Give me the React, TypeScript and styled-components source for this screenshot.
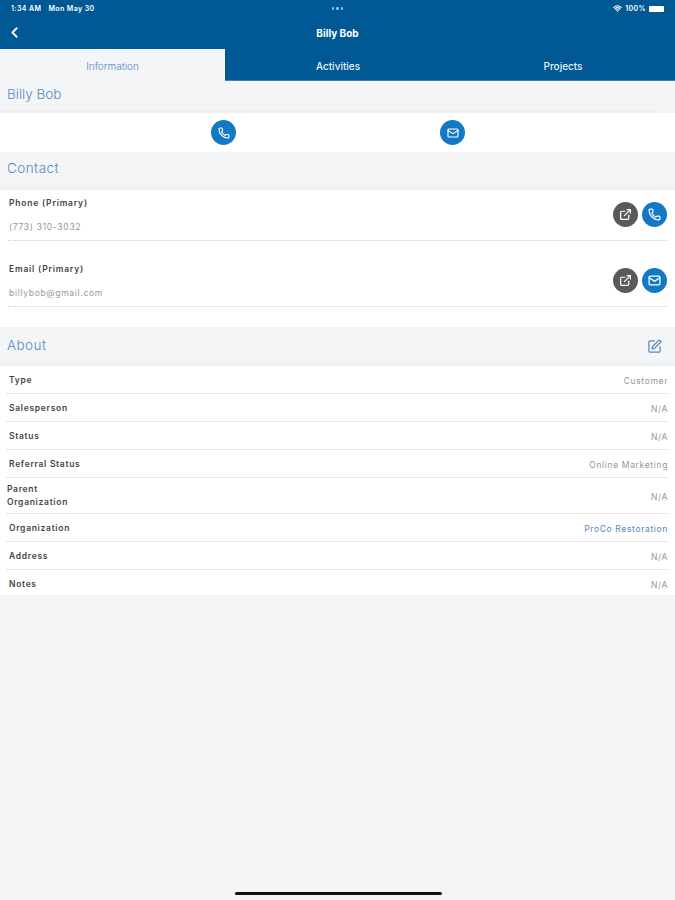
import styled, { createGlobalStyle } from "styled-components";
import { ChevronLeft, Wifi, Phone, Mail, ExternalLink, SquarePen } from "lucide-react";

const colors = {
  navy: "#005995",
  page: "#f4f5f7",
  blue: "#5389c4",
  button: "#1479c4",
  grey: "#5a5a5a",
  label: "#444444",
  value: "#969696",
  dots: "#cfcfcf",
};

const GlobalStyle = createGlobalStyle`
  html, body {
    margin: 0;
    padding: 0;
    background: ${colors.page};
    font-family: Inter, "Open Sans", sans-serif;
  }
  * { box-sizing: border-box; }
`;

const Page = styled.div`
  position: relative;
  width: 675px;
  height: 900px;
  overflow: hidden;
  background: ${colors.page};
`;

const TopBar = styled.header`
  height: 48px;
  background: ${colors.navy};
  color: #fff;
`;

const StatusBar = styled.div`
  height: 17px;
  padding: 0 11px;
  display: grid;
  grid-template-columns: 1fr auto 1fr;
  align-items: center;
  font-size: 7px;
  font-weight: 600;
  letter-spacing: 0.4px;
`;

const StatusLeft = styled.div`
  display: flex;
  gap: 7px;
`;

const StatusDots = styled.div`
  display: flex;
  gap: 2px;
`;

const Dot = styled.span`
  width: 2.5px;
  height: 2.5px;
  border-radius: 50%;
  background: #8fc0e6;
`;

const StatusRight = styled.div`
  display: flex;
  justify-content: flex-end;
  align-items: center;
  gap: 3px;
`;

const Battery = styled.span`
  width: 15px;
  height: 6px;
  border-radius: 1px;
  background: #fff;
`;

const NavRow = styled.div`
  position: relative;
  height: 31px;
  display: flex;
  align-items: center;
  justify-content: center;
  font-size: 10px;
  font-weight: 700;
`;

const BackIcon = styled(ChevronLeft)`
  position: absolute;
  left: 6px;
  top: 7px;
`;

const Tabs = styled.nav`
  height: 33px;
  display: grid;
  grid-template-columns: 225px 226px 224px;
  background: ${colors.navy};
`;

const Tab = styled.div<{ $active?: boolean }>`
  display: flex;
  align-items: center;
  justify-content: center;
  margin-top: ${(p) => (p.$active ? 1 : 0)}px;
  padding-top: ${(p) => (p.$active ? 2 : 3)}px;
  font-size: 10px;
  font-weight: ${(p) => (p.$active ? 300 : 500)};
  color: ${(p) => (p.$active ? colors.blue : "#e8f0f6")};
  background: ${(p) => (p.$active ? colors.page : "transparent")};
  border-bottom: ${(p) => (p.$active ? "none" : "1px solid #3f80b4")};
`;

const SectionHead = styled.div<{ $height: number; $short?: boolean }>`
  height: ${(p) => p.$height}px;
  margin-right: ${(p) => (p.$short ? 19 : 0)}px;
  padding: 0 13px 0 7px;
  display: flex;
  align-items: center;
  justify-content: space-between;
  border-bottom: 3px solid #eeeff1;
`;

const SectionTitle = styled.h2<{ $lift: number; $tight?: boolean }>`
  margin: 0 0 ${(p) => p.$lift}px;
  font-size: 13.5px;
  font-weight: 300;
  letter-spacing: ${(p) => (p.$tight ? 0 : 0.45)}px;
  color: ${colors.blue};
`;

const EditIcon = styled(SquarePen)`
  margin-top: 3px;
`;

const QuickActions = styled.div`
  height: 39px;
  display: grid;
  grid-template-columns: 236px 229px;
  justify-items: end;
  align-items: center;
  background: #fff;
`;

const RoundButton = styled.span<{ $grey?: boolean }>`
  width: 25px;
  height: 25px;
  flex: none;
  display: inline-flex;
  align-items: center;
  justify-content: center;
  border-radius: 50%;
  color: #fff;
  background: ${(p) => (p.$grey ? colors.grey : colors.button)};
`;

const WhiteBlock = styled.section`
  background: #fff;
`;

const ContactList = styled(WhiteBlock)`
  height: 137px;
  padding: 0 7px 0 8px;
`;

const ContactRow = styled.div`
  height: 51px;
  margin-bottom: 15px;
  padding: 7px 0 0 1px;
  display: flex;
  justify-content: space-between;
  border-bottom: 1px dotted ${colors.dots};
`;

const ContactText = styled.div`
  display: flex;
  flex-direction: column;
  gap: 11px;
`;

const ContactLabel = styled.span`
  font-size: 8.5px;
  font-weight: 600;
  line-height: 13px;
  letter-spacing: 0.8px;
  color: ${colors.label};
`;

const ContactValue = styled.span`
  font-size: 8.5px;
  line-height: 13px;
  letter-spacing: 0.7px;
  color: ${colors.value};
`;

const ContactActions = styled.div`
  display: flex;
  gap: 4px;
  margin: 5px 1px 0 0;
`;

const AboutList = styled(WhiteBlock)`
  height: 229px;
`;

const AboutRow = styled.div<{ $tall?: boolean }>`
  height: ${(p) => (p.$tall ? 36 : 28)}px;
  margin: 0 7px;
  padding: 2px 0 0 2px;
  display: flex;
  align-items: center;
  justify-content: space-between;
  border-bottom: 1px dotted ${colors.dots};
  &:last-child {
    border-bottom: none;
  }
`;

const AboutLabel = styled.span<{ $tall?: boolean }>`
  margin-left: ${(p) => (p.$tall ? -2 : 0)}px;
  margin-bottom: ${(p) => (p.$tall ? 2 : 1)}px;
  max-width: 76px;
  font-size: 8.5px;
  font-weight: 600;
  line-height: 13px;
  letter-spacing: 0.7px;
  color: ${colors.label};
`;

const AboutValue = styled.span<{ $link?: boolean }>`
  font-size: 8.5px;
  letter-spacing: 0.65px;
  color: ${(p) => (p.$link ? colors.blue : colors.value)};
`;

const HomeBar = styled.div`
  position: absolute;
  left: 235px;
  bottom: 5px;
  width: 207px;
  height: 3px;
  border-radius: 2px;
  background: #111;
`;

const about = [
  { label: "Type", value: "Customer" },
  { label: "Salesperson", value: "N/A" },
  { label: "Status", value: "N/A" },
  { label: "Referral Status", value: "Online Marketing" },
  { label: "Parent Organization", value: "N/A", tall: true },
  { label: "Organization", value: "ProCo Restoration", link: true },
  { label: "Address", value: "N/A" },
  { label: "Notes", value: "N/A" },
];

export default function App() {
  return (
    <Page>
      <GlobalStyle />
      <TopBar>
        <StatusBar>
          <StatusLeft>
            <span>1:34 AM</span>
            <span>Mon May 30</span>
          </StatusLeft>
          <StatusDots>
            <Dot />
            <Dot />
            <Dot />
          </StatusDots>
          <StatusRight>
            <Wifi size={9} strokeWidth={3} />
            <span>100%</span>
            <Battery />
          </StatusRight>
        </StatusBar>
        <NavRow>
          <BackIcon size={17} strokeWidth={2.6} />
          Billy Bob
        </NavRow>
      </TopBar>
      <Tabs>
        <Tab $active>Information</Tab>
        <Tab>Activities</Tab>
        <Tab>Projects</Tab>
      </Tabs>
      <SectionHead $height={32} $short>
        <SectionTitle $lift={4} $tight>
          Billy Bob
        </SectionTitle>
      </SectionHead>
      <QuickActions>
        <RoundButton>
          <Phone size={12} strokeWidth={2.3} />
        </RoundButton>
        <RoundButton>
          <Mail size={12} strokeWidth={2.3} />
        </RoundButton>
      </QuickActions>
      <SectionHead $height={38}>
        <SectionTitle $lift={3}>Contact</SectionTitle>
      </SectionHead>
      <ContactList>
        <ContactRow>
          <ContactText>
            <ContactLabel>Phone (Primary)</ContactLabel>
            <ContactValue>(773) 310-3032</ContactValue>
          </ContactText>
          <ContactActions>
            <RoundButton $grey>
              <ExternalLink size={13} strokeWidth={2.3} />
            </RoundButton>
            <RoundButton>
              <Phone size={13} strokeWidth={2.3} />
            </RoundButton>
          </ContactActions>
        </ContactRow>
        <ContactRow>
          <ContactText>
            <ContactLabel>Email (Primary)</ContactLabel>
            <ContactValue>billybob@gmail.com</ContactValue>
          </ContactText>
          <ContactActions>
            <RoundButton $grey>
              <ExternalLink size={13} strokeWidth={2.3} />
            </RoundButton>
            <RoundButton>
              <Mail size={13} strokeWidth={2.3} />
            </RoundButton>
          </ContactActions>
        </ContactRow>
      </ContactList>
      <SectionHead $height={39}>
        <SectionTitle $lift={1}>About</SectionTitle>
        <EditIcon size={15} color={colors.blue} />
      </SectionHead>
      <AboutList>
        {about.map((row) => (
          <AboutRow key={row.label} $tall={row.tall}>
            <AboutLabel $tall={row.tall}>{row.label}</AboutLabel>
            <AboutValue $link={row.link}>{row.value}</AboutValue>
          </AboutRow>
        ))}
      </AboutList>
      <HomeBar />
    </Page>
  );
}
